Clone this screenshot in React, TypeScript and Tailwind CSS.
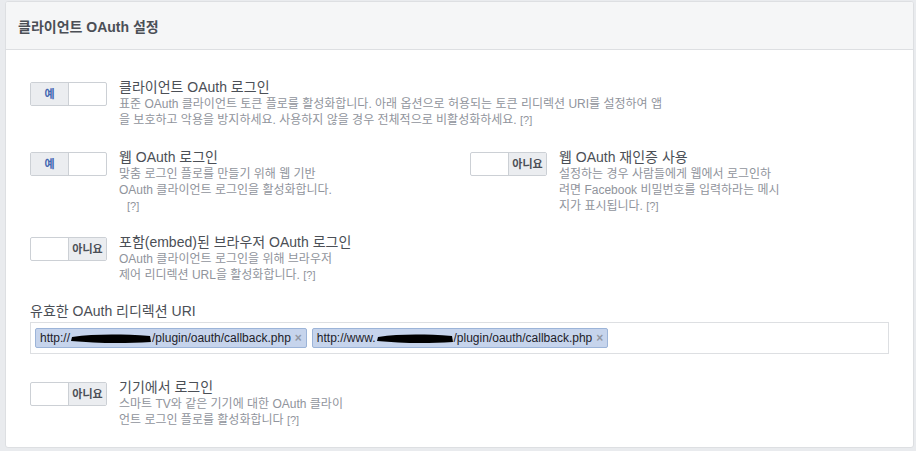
import React from 'react';

type ToggleProps = { on: boolean };

const Toggle: React.FC<ToggleProps> = ({ on }) => (
  <div className="flex h-[24px] w-[77px] shrink-0 overflow-hidden rounded-[2px] border border-[#ccd0d5] bg-white">
    {on ? (
      <>
        <div className="flex w-[38px] items-center justify-center border-r border-[#ccd0d5] bg-[#ebedf0] text-[11px] font-bold text-[#4267b2]">
          예
        </div>
        <div className="flex-1" />
      </>
    ) : (
      <>
        <div className="flex-1" />
        <div className="flex w-[38px] items-center justify-center border-l border-[#ccd0d5] bg-[#ebedf0] text-[11px] font-bold text-[#4b4f56]">
          아니요
        </div>
      </>
    )}
  </div>
);

type SettingProps = {
  on: boolean;
  title: string;
  lines: React.ReactNode[];
};

const Help = () => <span className="text-[11px] text-[#90949c]">[?]</span>;

// toggle sits 4px below the title's line box
const Setting: React.FC<SettingProps> = ({ on, title, lines }) => (
  <div className="flex gap-[12px]">
    <div className="mt-[4px]">
      <Toggle on={on} />
    </div>
    <div>
      <div className="text-[14px] leading-[18px] text-[#4b4f56]">{title}</div>
      {lines.map((l, i) => (
        <div key={i} className="whitespace-nowrap text-[12px] leading-[16px] text-[#90949c]">
          {l}
        </div>
      ))}
    </div>
  </div>
);

const Redact: React.FC<{ w: number }> = ({ w }) => (
  <svg width={w} height="14" viewBox={`0 0 ${w} 14`} className="inline-block align-middle">
    <path
      d={`M2 6 C ${w * 0.3} 3, ${w * 0.6} 3, ${w - 2} 5 L ${w - 1} 11 C ${w * 0.6} 13, ${w * 0.3} 12, 1 10 Z`}
      fill="#000"
    />
  </svg>
);

const Token: React.FC<{ prefix: string; w: number }> = ({ prefix, w }) => (
  <div className="flex h-[20px] items-center rounded-[2px] border border-[#9cb4d8] bg-[#c6d4ec] pl-[4px] pr-[4px] text-[12px] text-[#1d2129]">
    <span>{prefix}</span>
    <Redact w={w} />
    <span>/plugin/oauth/callback.php</span>
    <span className="ml-[4px] text-[12px] font-bold text-[#9197a3]">×</span>
  </div>
);

export default function App() {
  return (
    <div className="min-h-screen bg-[#e9ebee] pl-[5px] pr-[2px] pt-[1px] font-['Liberation_Sans','Noto_Sans_CJK_KR',sans-serif]">
      <div className="overflow-hidden rounded-[3px] border border-[#dddfe2] bg-white">
        <div className="flex h-[48px] items-center border-b border-[#dddfe2] bg-[#f5f6f7] px-[12px] pt-[4px] text-[14px] font-bold text-[#4b4f56]">
          클라이언트 OAuth 설정
        </div>

        <div className="flex flex-col px-[24px] pb-[19px] pt-[28px]">
          <Setting
            on
            title="클라이언트 OAuth 로그인"
            lines={[
              '표준 OAuth 클라이언트 토큰 플로를 활성화합니다. 아래 옵션으로 허용되는 토큰 리디렉션 URI를 설정하여 앱',
              <>
                을 보호하고 악용을 방지하세요. 사용하지 않을 경우 전체적으로 비활성화하세요. <Help />
              </>,
            ]}
          />

          <div className="mt-[20px] grid grid-cols-[440px_1fr]">
            <Setting
              on
              title="웹 OAuth 로그인"
              lines={[
                '맞춤 로그인 플로를 만들기 위해 웹 기반',
                'OAuth 클라이언트 로그인을 활성화합니다.',
                <span className="pl-[8px]">
                  <Help />
                </span>,
              ]}
            />
            <Setting
              on={false}
              title="웹 OAuth 재인증 사용"
              lines={[
                '설정하는 경우 사람들에게 웹에서 로그인하',
                '려면 Facebook 비밀번호를 입력하라는 메시',
                <>
                  지가 표시됩니다. <Help />
                </>,
              ]}
            />
          </div>

          <div className="mt-[19px]">
            <Setting
              on={false}
              title="포함(embed)된 브라우저 OAuth 로그인"
              lines={[
                'OAuth 클라이언트 로그인을 위해 브라우저',
                <>
                  제어 리디렉션 URL을 활성화합니다. <Help />
                </>,
              ]}
            />
          </div>

          <div className="mt-[19px] text-[14px] leading-[18px] text-[#4b4f56]">유효한 OAuth 리디렉션 URI</div>
          <div className="mt-[2px] flex h-[32px] items-center gap-[5px] border border-[#dddfe2] bg-white px-[4px]">
            <Token prefix="http://" w={82} />
            <Token prefix="http://www." w={78} />
          </div>

          <div className="mt-[24px]">
            <Setting
              on={false}
              title="기기에서 로그인"
              lines={[
                '스마트 TV와 같은 기기에 대한 OAuth 클라이',
                <>
                  언트 로그인 플로를 활성화합니다 <Help />
                </>,
              ]}
            />
          </div>
        </div>
      </div>
    </div>
  );
}
